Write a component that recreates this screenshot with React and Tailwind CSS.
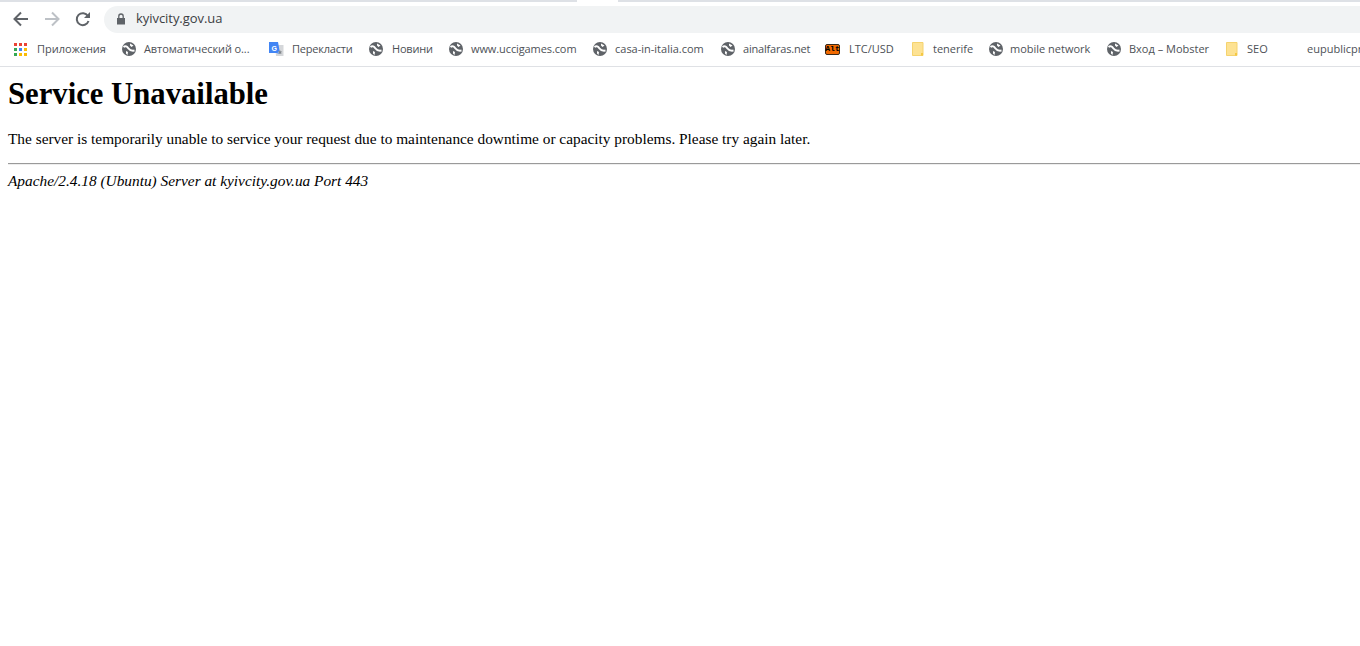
const BOOKMARKS = [
  { icon: 'apps', label: 'Приложения', gap: 'gap-[10px]', text: 'w-[67px]' },
  { icon: 'globe', label: 'Автоматический о...', gap: 'gap-[8px] ml-[2px]', text: 'w-[106px] tracking-[-0.1px]' },
  { icon: 'translate', label: 'Перекласти', gap: 'gap-[8px] ml-[2px]', text: 'w-[61px] tracking-[-0.2px]' },
  { icon: 'globe', label: 'Новини', gap: 'gap-[9px]', text: 'w-[41px] tracking-[-0.2px]' },
  { icon: 'globe', label: 'www.uccigames.com', gap: 'gap-[8px]', text: 'w-[106px] tracking-[-0.1px]' },
  { icon: 'globe', label: 'casa-in-italia.com', gap: 'gap-[8px]', text: 'w-[89px]' },
  { icon: 'globe', label: 'ainalfaras.net', gap: 'gap-[8px] ml-[1px]', text: 'w-[67px] tracking-[-0.2px]' },
  { icon: 'alt', label: 'LTC/USD', gap: 'gap-[9px] -ml-[1px]', text: 'w-[45px]' },
  { icon: 'folder', label: 'tenerife', gap: 'gap-[9px] ml-[2px]', text: 'w-[39px]' },
  { icon: 'globe', label: 'mobile network', gap: 'gap-[7px] ml-[1px]', text: 'w-[81px]' },
  { icon: 'globe', label: 'Вход – Mobster', gap: 'gap-[8px]', text: 'w-[80px]' },
  { icon: 'folder', label: 'SEO', gap: 'gap-[9px] ml-[1px]', text: 'w-[21px]' },
  { icon: 'none', label: 'eupublicpr', gap: 'ml-[23px]' },
]

function Globe() {
  return (
    <svg width="14" height="14" viewBox="0 0 14 14" className="shrink-0">
      <circle cx="7" cy="7" r="7" fill="#5f6368" />
      <path d="M1.5 5C3.5 3.5 5 4.5 6.5 6.5 8 8.5 9.5 9 12.5 8.5" fill="none" stroke="#fff" strokeWidth="2" />
      <path d="M8 1.5l3.5 2-2 1.5L8 3.5ZM4 9l2 1-.5 3L4 11.5Z" fill="#fff" />
    </svg>
  )
}

function Apps() {
  const colors = ['#ea4335', '#ea4335', '#ea4335', '#34a853', '#4285f4', '#fbbc05', '#34a853', '#fbbc05', '#fbbc05']
  return (
    <div className="grid grid-cols-3 gap-[2px] w-[13px] shrink-0">
      {colors.map((c, i) => (
        <div key={i} className="w-[3px] h-[3px]" style={{ backgroundColor: c }} />
      ))}
    </div>
  )
}

function Translate() {
  return (
    <svg width="16" height="16" viewBox="0 0 16 16" className="shrink-0">
      <path d="M7 4h8.5v11H8Z" fill="#d5d7da" />
      <path d="M1 1h9l2 11H1Z" fill="#4285f4" />
      <path d="M10.5 10 12 13 9 13Z" fill="#8ab4f8" />
      <text x="3.5" y="9.5" fontSize="7" fontWeight="700" fill="#fff" fontFamily="Arial">G</text>
      <path d="M12 9l.7 1.4 1.5.2-1.1 1 .3 1.5-1.4-.7-1.4.7.3-1.5-1.1-1 1.5-.2Z" fill="#80868b" />
    </svg>
  )
}

function Folder() {
  return (
    <svg width="12" height="14" viewBox="0 0 12 14" className="shrink-0">
      <path d="M.5.5h10.5v13H.5Z" fill="#fde293" stroke="#f5d36e" />
      <path d="M9 11h2v2.5H9Z" fill="#f5c842" />
    </svg>
  )
}

function Alt() {
  return (
    <div className="w-[15px] h-[11px] bg-[#f26a00] border border-[#3a2a1c] rounded-[2px] flex items-center justify-center shrink-0">
      <span className="text-[8px] leading-none font-bold text-black font-['Liberation_Mono',monospace]">Alt</span>
    </div>
  )
}

function BookmarkIcon({ type }) {
  if (type === 'apps') return <Apps />
  if (type === 'globe') return <Globe />
  if (type === 'translate') return <Translate />
  if (type === 'folder') return <Folder />
  if (type === 'alt') return <Alt />
  return null
}

export default function App() {
  return (
    <div className="min-h-[646px] bg-white text-black overflow-hidden">
      {/* Tab strip remnant */}
      <div className="h-[2px] flex bg-[#dee1e6]">
        <div className="ml-[577px] w-[41px] bg-white" />
      </div>

      {/* Toolbar */}
      <div className="h-[34px] flex items-center pl-[12px]">
        <svg width="18" height="18" viewBox="0 0 18 18" fill="none" stroke="#5f6368" strokeWidth="2" className="shrink-0">
          <path d="M16 9H3M9 2.5 2.5 9 9 15.5" />
        </svg>
        <svg width="18" height="18" viewBox="0 0 18 18" fill="none" stroke="#bdc1c6" strokeWidth="2" className="shrink-0 ml-[13px]">
          <path d="M2 9h13M9 2.5 15.5 9 9 15.5" />
        </svg>
        <svg width="18" height="18" viewBox="0 0 18 18" fill="none" className="shrink-0 ml-[13px]">
          <path d="M14.5 11a6 6 0 1 1-.6-5" stroke="#5f6368" strokeWidth="2" />
          <path d="M16 2v6h-6Z" fill="#5f6368" />
        </svg>
        <div className="ml-[12px] flex-1 h-[27px] bg-[#f1f3f4] rounded-l-full flex items-center pl-[12px]">
          <svg width="10" height="12" viewBox="0 0 10 12" className="shrink-0">
            <path d="M1 5h8v6.5H1Z" fill="#5f6368" />
            <path d="M2.8 5V3.2a2.2 2.2 0 0 1 4.4 0V5" fill="none" stroke="#5f6368" strokeWidth="1.3" />
          </svg>
          <span className="ml-[10px] text-[13px] tracking-[-0.05px] text-[#3c4043] font-['Open_Sans','Noto_Sans',sans-serif]">kyivcity.gov.ua</span>
        </div>
      </div>

      {/* Bookmarks */}
      <div className="h-[31px] pb-[4px] flex items-center pl-[14px] gap-[16px] border-b border-[#dfe1e5] whitespace-nowrap overflow-hidden font-['Open_Sans','Noto_Sans',sans-serif] text-[11px] text-[#4d5156]">
        {BOOKMARKS.map((b, i) => (
          <div key={i} className={`flex items-center shrink-0 ${b.gap}`}>
            <BookmarkIcon type={b.icon} />
            <span className={b.text}>{b.label}</span>
          </div>
        ))}
      </div>

      {/* Page */}
      <div className="pl-[8px] font-['Liberation_Serif',serif] text-[15.35px] leading-[18px]">
        <h1 className="mt-[10px] text-[30.7px] leading-[35px] font-bold">Service Unavailable</h1>
        <p className="mt-[18px]">The server is temporarily unable to service your request due to maintenance downtime or capacity problems. Please try again later.</p>
        <hr className="mt-[15px] border-t border-[#9a9a9a] border-b border-b-[#eeeeee]" />
        <p className="mt-[7px] italic">Apache/2.4.18 (Ubuntu) Server at kyivcity.gov.ua Port 443</p>
      </div>
    </div>
  )
}
